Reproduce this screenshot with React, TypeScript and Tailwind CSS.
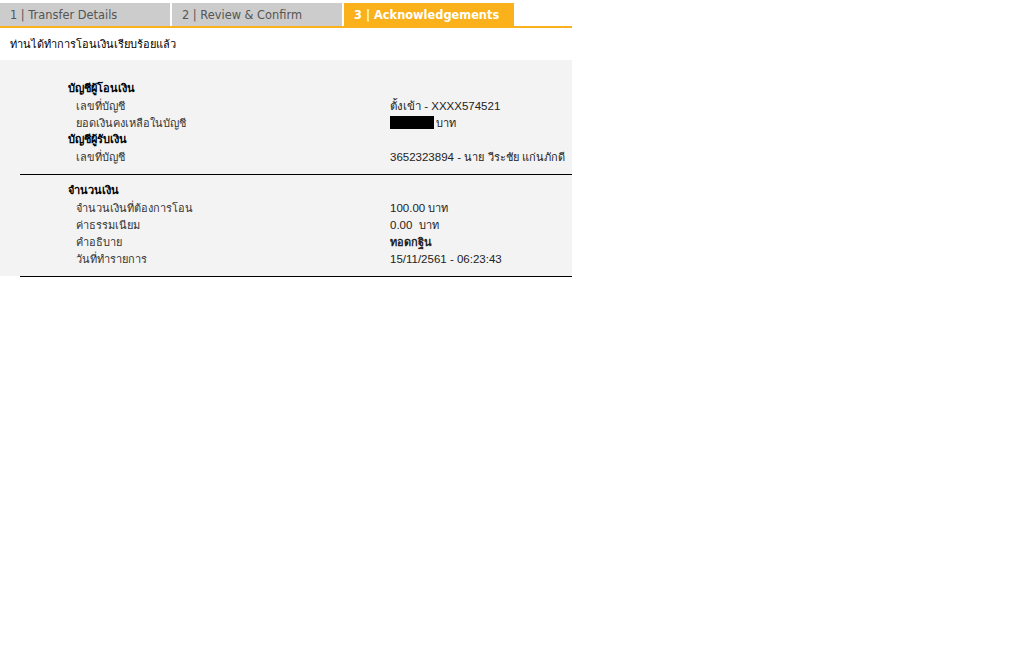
import React from 'react';

const tabs = [
  { label: '1 | Transfer Details', active: false },
  { label: '2 | Review & Confirm', active: false },
  { label: '3 | Acknowledgements', active: true },
];

const thai = "text-[11px] font-['Tahoma','DejaVu_Sans',sans-serif]";

function Row({ label, children }: { label: string; children: React.ReactNode }) {
  return (
    <div className="flex h-[17px] items-baseline pt-[1px] overflow-hidden">
      <div className="w-[322px] pl-2 text-[11px] text-[#333]">{label}</div>
      <div className="text-[11.5px] text-[#222] font-['Liberation_Sans',sans-serif]">{children}</div>
    </div>
  );
}

function Heading({ children }: { children: React.ReactNode }) {
  return <div className="h-[17px] pt-[1px] text-[11px] font-bold text-black">{children}</div>;
}

export default function App() {
  return (
    <div className="w-[1012px] h-[645px] bg-white font-['Tahoma','DejaVu_Sans',sans-serif]">
      <div className="w-[572px]">
        <div className="flex gap-[2px] pt-[3px] border-b-2 border-[#fbb11b]">
          {tabs.map((t) => (
            <div
              key={t.label}
              className={`w-[170px] h-[23px] flex items-center pl-[10px] pt-[2px] text-[11.4px] font-['DejaVu_Sans',sans-serif] ${
                t.active ? 'bg-[#fbb11b] text-white font-bold' : 'bg-[#cccccc] text-[#555]'
              }`}
            >
              {t.label}
            </div>
          ))}
        </div>

        <div className="px-[10px] pt-[9px] h-[32px] text-[11px] text-black">ท่านได้ทำการโอนเงินเรียบร้อยแล้ว</div>

        <div className="bg-[#f3f3f3] pt-[20px]">
          <div className="pl-[68px]">
            <Heading>บัญชีผู้โอนเงิน</Heading>
            <Row label="เลขที่บัญชี">ตั้งเข้า - XXXX574521</Row>
            <Row label="ยอดเงินคงเหลือในบัญชี">
              <span className="inline-block w-[44px] h-[13px] bg-black align-[-2px] mr-[2px]" />
              <span className={thai}>บาท</span>
            </Row>
            <Heading>บัญชีผู้รับเงิน</Heading>
            <Row label="เลขที่บัญชี">
              3652323894 - <span className={thai}>นาย วีระชัย แก่นภักดี</span>
            </Row>
          </div>
          <div className="ml-[20px] mt-[9px] border-t border-black" />
          <div className="pl-[68px] pt-[7px] pb-[9px]">
            <Heading>จำนวนเงิน</Heading>
            <Row label="จำนวนเงินที่ต้องการโอน">
              100.00 <span className={thai}>บาท</span>
            </Row>
            <Row label="ค่าธรรมเนียม">
              0.00&nbsp; <span className={thai}>บาท</span>
            </Row>
            <Row label="คำอธิบาย">
              <span className={`${thai} font-bold`}>ทอดกฐิน</span>
            </Row>
            <Row label="วันที่ทำรายการ">15/11/2561 - 06:23:43</Row>
          </div>
        </div>
        <div className="ml-[20px] border-t border-black" />
      </div>
    </div>
  );
}
